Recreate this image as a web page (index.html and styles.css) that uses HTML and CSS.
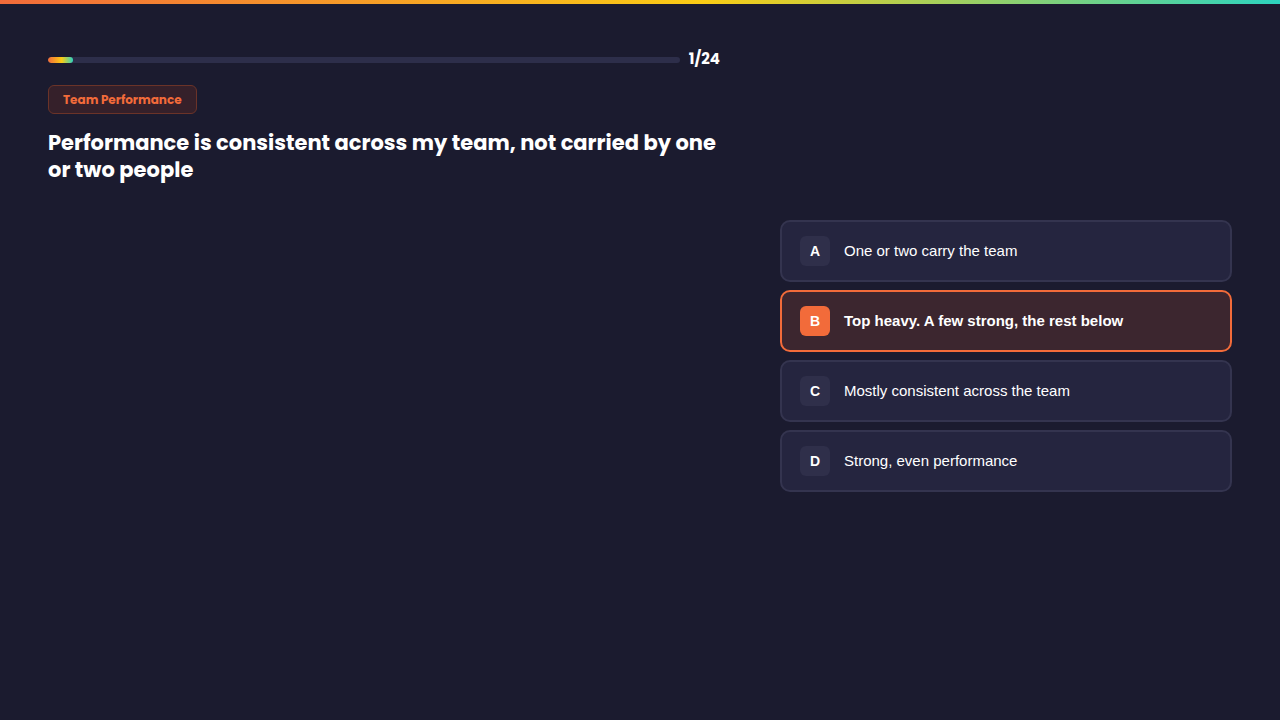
FILE: index.html
```html
<!DOCTYPE html>
<html lang="en">
<head>
<meta charset="utf-8">
<title>Quiz</title>
<link rel="stylesheet" href="styles.css">
</head>
<body>
<div class="topbar"></div>
<main class="layout">
  <section class="question">
    <div class="progress-row">
      <div class="track"><div class="fill" style="width:25px"></div></div>
      <span class="count">1/24</span>
    </div>
    <span class="tag">Team Performance</span>
    <h1 class="title">Performance is consistent across my team, not carried by one or two people</h1>
  </section>
  <section class="options">
    <button class="option"><span class="key">A</span><span class="label">One or two carry the team</span></button>
    <button class="option selected"><span class="key">B</span><span class="label">Top heavy. A few strong, the rest below</span></button>
    <button class="option"><span class="key">C</span><span class="label">Mostly consistent across the team</span></button>
    <button class="option"><span class="key">D</span><span class="label">Strong, even performance</span></button>
  </section>
</main>
</body>
</html>
```
FILE: styles.css
```css
* { box-sizing: border-box; }
html, body { margin: 0; padding: 0; }
body {
  background: #1b1b2f;
  color: #ffffff;
  font-family: "Liberation Sans", Arial, sans-serif;
  height: 720px;
  overflow: hidden;
}
.topbar {
  height: 4px;
  background: linear-gradient(90deg, #f26b3a 0%, #facc15 55%, #2dd4bf 100%);
}
.layout {
  display: grid;
  grid-template-columns: 672px 452px;
  column-gap: 60px;
  padding: 0 48px;
  height: 716px;
}
.question {
  padding-top: 46px;
  display: flex;
  flex-direction: column;
  align-items: flex-start;
}
.progress-row {
  display: flex;
  align-items: center;
  gap: 9px;
  width: 100%;
  height: 20px;
}
.track {
  flex: 1;
  height: 6px;
  border-radius: 3px;
  background: #2d2e4a;
  overflow: hidden;
}
.fill {
  height: 100%;
  border-radius: 3px;
  background: linear-gradient(90deg, #f26b3a, #facc15 55%, #2dd4bf);
}
.count {
  font-family: "Poppins", "Inter", sans-serif;
  font-weight: 700;
  font-size: 15px;
  line-height: 18px;
  padding-bottom: 2px;
  color: #ffffff;
}
.tag {
  margin-top: 15px;
  display: inline-flex;
  align-items: center;
  height: 29px;
  padding: 0 14px;
  border: 1px solid #6b3328;
  background: #35202a;
  border-radius: 6px;
  color: #f26b3a;
  font-family: "Poppins", "Inter", sans-serif;
  font-weight: 700;
  font-size: 12px;
}
.title {
  margin: 15px 0 0;
  font-family: "Poppins", "Inter", sans-serif;
  font-weight: 700;
  font-size: 21px;
  line-height: 1.3;
  color: #ffffff;
}
.options {
  align-self: start;
  margin-top: 216px;
  display: flex;
  flex-direction: column;
  gap: 8px;
}
.option {
  display: flex;
  align-items: center;
  gap: 14px;
  height: 62px;
  padding: 0 18px 1px;
  border: 2px solid #34344f;
  border-radius: 10px;
  background: #25253f;
  color: #ffffff;
  font-family: "Liberation Sans", Arial, sans-serif;
  font-size: 15px;
  text-align: left;
  cursor: pointer;
}
.key {
  display: flex;
  align-items: center;
  justify-content: center;
  width: 30px;
  height: 30px;
  border-radius: 6px;
  background: #2f2f4a;
  font-weight: 700;
  font-size: 14px;
}
.option.selected {
  border-color: #f26b3a;
  background: #3c262f;
}
.option.selected .key { background: #f26b3a; }
.option.selected .label { font-weight: 700; }
```
